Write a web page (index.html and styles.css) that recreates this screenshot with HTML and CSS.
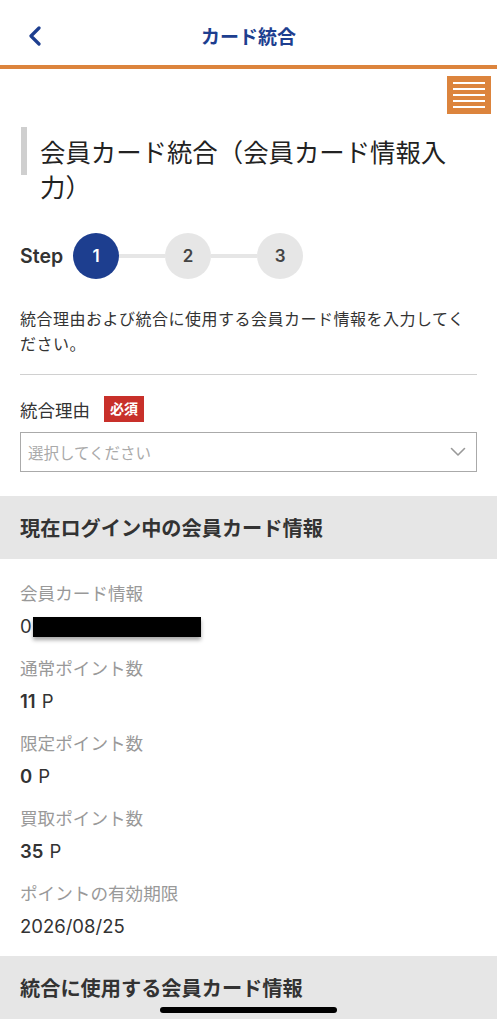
FILE: index.html
```html
<!DOCTYPE html>
<html lang="ja">

<head>
    <meta charset="UTF-8">
    <meta name="viewport" content="width=device-width, initial-scale=1.0">
    <title>カード統合</title>
    <link rel="stylesheet" href="styles.css">
</head>

<body>
    <header class="topbar">
        <a class="back" href="#">
            <svg width="16" height="20" viewBox="0 0 16 20">
                <polyline points="12,2 4,10 12,18" fill="none" stroke="#1d3e8f" stroke-width="3.2" stroke-linecap="round" stroke-linejoin="round" />
            </svg>
        </a>
        <div class="topbar-title">カード統合</div>
    </header>

    <div class="menu-row">
        <div class="menu-btn">
            <span></span><span></span><span></span><span></span><span></span>
        </div>
    </div>

    <main class="content">
        <div class="page-title">
            <div class="bar"></div>
            <h1>会員カード統合（会員カード情報入力）</h1>
        </div>

        <div class="steps">
            <span class="step-label">Step</span>
            <span class="circle active">1</span>
            <span class="line"></span>
            <span class="circle">2</span>
            <span class="line"></span>
            <span class="circle">3</span>
        </div>

        <p class="desc">統合理由および統合に使用する会員カード情報を入力してください。</p>

        <hr class="divider">

        <div class="field-label">
            <span>統合理由</span>
            <span class="required">必須</span>
        </div>
        <div class="select">
            <span>選択してください</span>
            <svg width="16" height="10" viewBox="0 0 16 10">
                <polyline points="1.5,1.5 8,8 14.5,1.5" fill="none" stroke="#999" stroke-width="1.6" stroke-linecap="round" stroke-linejoin="round" />
            </svg>
        </div>
    </main>

    <section class="section">
        <h2 class="section-head">現在ログイン中の会員カード情報</h2>
        <div class="items">
            <div class="item">
                <div class="item-label">会員カード情報</div>
                <div class="item-value">0<span class="mask"></span></div>
            </div>
            <div class="item">
                <div class="item-label">通常ポイント数</div>
                <div class="item-value"><b>11</b> P</div>
            </div>
            <div class="item">
                <div class="item-label">限定ポイント数</div>
                <div class="item-value"><b>0</b> P</div>
            </div>
            <div class="item">
                <div class="item-label">買取ポイント数</div>
                <div class="item-value"><b>35</b> P</div>
            </div>
            <div class="item">
                <div class="item-label">ポイントの有効期限</div>
                <div class="item-value">2026/08/25</div>
            </div>
        </div>
    </section>

    <section class="section">
        <h2 class="section-head">統合に使用する会員カード情報</h2>
    </section>

    <div class="home-indicator"></div>
</body>

</html>
```

FILE: styles.css
```css
* {
    margin: 0;
    padding: 0;
    box-sizing: border-box;
}

body {
    font-family: Inter, "Noto Sans CJK JP", sans-serif;
    color: #333;
    background: #fff;
    width: 497px;
    overflow: hidden;
}

/* ヘッダー */
.topbar {
    height: 69px;
    border-bottom: 4px solid #dc843d;
    display: flex;
    align-items: center;
    justify-content: center;
    position: relative;
}

.back {
    position: absolute;
    left: 27px;
    top: 26px;
    display: block;
    line-height: 0;
}

.topbar-title {
    font-size: 19px;
    font-weight: bold;
    color: #1d3e8f;
    margin-top: 6px;
}

.menu-row {
    display: flex;
    justify-content: flex-end;
    padding: 7px 6px 0 0;
}

.menu-btn {
    width: 44px;
    height: 38px;
    background: #dc843d;
    display: flex;
    flex-direction: column;
    justify-content: center;
    gap: 3.5px;
    padding: 0 6px;
}

.menu-btn span {
    height: 2.5px;
    background: #fff;
}

.content {
    padding: 0 20px;
}

/* タイトル */
.page-title {
    display: flex;
    margin-top: 13px;
}

.page-title .bar {
    width: 6px;
    height: 48px;
    background: #cfcfcf;
    flex-shrink: 0;
    margin-left: 1px;
}

.page-title h1 {
    font-size: 25.4px;
    font-weight: normal;
    line-height: 35px;
    padding: 8px 18px 0 13px;
    color: #222;
}

/* ステップ */
.steps {
    display: flex;
    align-items: center;
    margin-top: 28px;
}

.step-label {
    font-size: 19.5px;
    font-weight: 600;
    margin-right: 10px;
}

.circle {
    width: 46px;
    height: 46px;
    border-radius: 50%;
    background: #e6e6e6;
    display: flex;
    align-items: center;
    justify-content: center;
    font-size: 17px;
    font-weight: 600;
    color: #444;
}

.circle.active {
    background: #1d3e8f;
    color: #fff;
}

.line {
    width: 46px;
    height: 4px;
    background: #e6e6e6;
}

.desc {
    font-size: 16px;
    letter-spacing: 0.5px;
    line-height: 25px;
    margin-top: 28px;
}

.divider {
    border: none;
    border-top: 1px solid #d0d0d0;
    margin-top: 17px;
}

/* 統合理由 */
.field-label {
    display: flex;
    align-items: center;
    margin-top: 21px;
    font-size: 17.5px;
}

.required {
    background: #c8302a;
    color: #fff;
    font-size: 14px;
    font-weight: bold;
    height: 26px;
    line-height: 26px;
    padding: 0 6px;
    margin-left: 14px;
}

.select {
    margin-top: 10px;
    height: 40px;
    border: 1.5px solid #aaa;
    display: flex;
    align-items: center;
    justify-content: space-between;
    padding: 0 10px 0 7px;
    color: #aaa;
    font-size: 15.5px;
}

/* 会員カード情報 */
.section {
    margin-top: 24px;
}

.section+.section {
    margin-top: 16px;
}

.section-head {
    background: #e6e6e6;
    height: 63px;
    display: flex;
    align-items: center;
    padding: 0 20px;
    font-size: 20.2px;
    font-weight: bold;
    color: #333;
}

.items {
    padding: 22px 20px 0;
}

.item {
    margin-bottom: 17px;
}

.item-label {
    font-size: 17.6px;
    line-height: 25px;
    color: #999;
}

.item-value {
    font-size: 18.5px;
    line-height: 25px;
    margin-top: 8px;
    color: #333;
    display: flex;
    align-items: center;
}

.item-value b {
    font-weight: 600;
    margin-right: 6px;
}

.mask {
    display: inline-block;
    width: 168px;
    height: 20px;
    background: #000;
    box-shadow: 0 3px 4px rgba(0, 0, 0, 0.35);
    margin-left: 1px;
}

.home-indicator {
    position: fixed;
    left: 160px;
    top: 1007px;
    width: 177px;
    height: 6px;
    border-radius: 3px;
    background: #000;
}
```
